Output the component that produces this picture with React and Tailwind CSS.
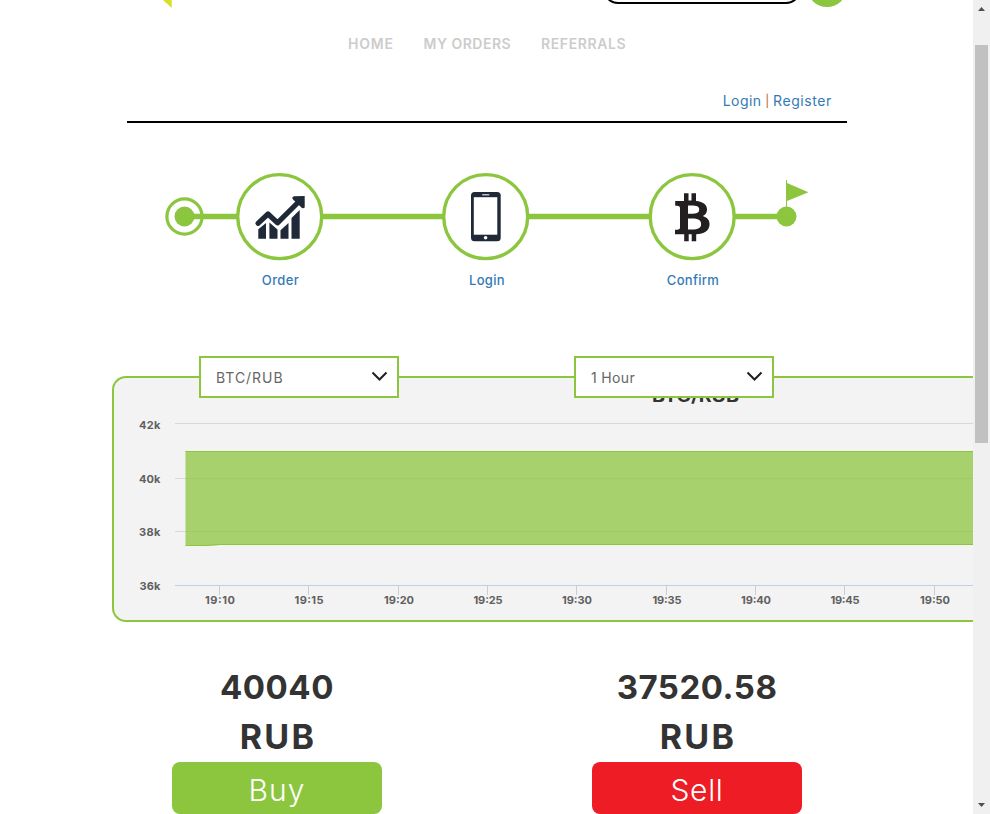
const TIMES = ["19:10", "19:15", "19:20", "19:25", "19:30", "19:35", "19:40", "19:45", "19:50"];
const LEVELS = [
  { label: "42k", y: 423.5, baseline: 429 },
  { label: "40k", y: 478.5, baseline: 483 },
  { label: "38k", y: 531.5, baseline: 536 },
];
const STEPS = [280, 486, 692.5];

function Header() {
  return (
    <header className="flex h-[123px] shrink-0 flex-col">
      <div className="flex h-2 items-start overflow-hidden">
        <svg className="ml-[163px] h-2 w-[9px]" viewBox="0 0 9 8">
          <path d="M0 0H8.7V8Z" fill="#d9df26" />
        </svg>
        <div className="-mt-[36px] ml-[431px] h-10 w-[198px] shrink-0 rounded-[15px] border-2 border-black" />
        <div className="-mt-[33px] ml-[6px] size-10 shrink-0 rounded-full bg-[#8cc63f]" />
      </div>
      <nav className="ml-[348px] mt-[26px] flex h-5 items-center text-[14px] font-semibold leading-5 text-[#ccc]">
        <a className="w-[75.5px] tracking-[0.8px]">HOME</a>
        <a className="w-[117.5px] tracking-[0.5px]">MY ORDERS</a>
        <a className="tracking-[0.6px]">REFERRALS</a>
      </nav>
      <div className="ml-[127px] mt-auto flex h-[32px] w-[720px] justify-end border-b-2 border-black pr-[15px] text-[14px] leading-5 text-[#337ab7]">
        <a className="tracking-[0.45px]">Login</a>
        <span className="w-[11.5px] text-center text-[12px] text-[#b5652a]">|</span>
        <a className="tracking-[0.6px]">Register</a>
      </div>
    </header>
  );
}

function Stepper() {
  return (
    <section className="ml-[160px] mt-[47px] w-[655px] shrink-0">
      <svg className="block h-[95px] w-[655px]" viewBox="160 170 655 95">
        <g stroke="#8cc63f" fill="none">
          <path d="M184 216.5H786" strokeWidth="5.4" />
          <circle cx="184.5" cy="216.5" r="17.6" strokeWidth="3.2" />
          {STEPS.map((x) => (
            <circle key={x} cx={x - 0.3} cy="216.6" r="42" strokeWidth="3.4" fill="#fff" />
          ))}
        </g>
        <circle cx="184.5" cy="216.5" r="10" fill="#8cc63f" />
        <circle cx="786.5" cy="216.5" r="10" fill="#8cc63f" />
        <path d="M786 180H787V183L808.5 192.3L787 201V210H786Z" fill="#8cc63f" />
        <g fill="#1f2937">
          <path d="M258.3 229.2L266 223V238.8H258.3ZM269.4 222.5L277.5 229.4V238.8H269.4ZM280.5 230.2L288.5 223V238.8H280.5ZM291.5 218L299.7 210V238.8H291.5Z" />
          <path d="M258 223.3L268 214L277.5 222.8L299 201.5" fill="none" stroke="#1f2937" strokeWidth="5.2" strokeLinecap="round" strokeLinejoin="round" />
          <path d="M294 196.3L304.7 196V207.5Q302.5 209.3 301 207L293.5 200Q290.8 197.5 294 196.3Z" />
        </g>
        <rect x="471" y="192" width="29.7" height="49.3" rx="3.5" fill="#1f2937" />
        <rect x="473.8" y="197.2" width="23.5" height="37.5" fill="#fff" />
        <rect x="482" y="194.1" width="7.5" height="1.4" rx=".7" fill="#bbc0c5" />
        <circle cx="485.6" cy="237.8" r="1.8" fill="#fff" />
        <path
          d="M684 193.3H688.5V200.5H691.5V193.3H696V201C703 201.5 707.5 205 707 210C706.7 213 705.5 215 702.8 216C707.5 217.5 710 220.5 709.5 225C709 231 704 234 696.2 234.3V241.2H691.7V234.3H688.7V241.2H684.2V234.3H675V229.8C679 229.8 680 229.5 680 227.3V208C680 206 678.5 205.7 675.2 205.7V201H684ZM688 205.6V213.7H691C697 213.7 699.2 212.5 699.2 209.5C699.2 206.5 696.5 205.6 691.5 205.6ZM688 218.4V229.5H692C698 229.5 701.1 228.2 701.1 224C701.1 219.9 698 218.4 692 218.4Z"
          fill="#231f20"
          fillRule="evenodd"
        />
      </svg>
      <div className="ml-[17px] mt-[5px] flex h-5 text-center text-[13px] font-medium leading-5 text-[#337ab7]">
        <a className="w-[207px] tracking-[0.4px]">Order</a>
        <a className="w-[206px] tracking-[0.3px]">Login</a>
        <a className="w-[206px] tracking-[0.3px]">Confirm</a>
      </div>
    </section>
  );
}

function Select({ children, className }) {
  return (
    <div className={"absolute -top-[22px] flex h-[42px] w-[200px] items-center justify-between border-2 border-[#8cc63f] bg-white pl-[15px] pr-[9px] text-[14px] text-[#666] " + className}>
      {children}
      <svg className="-mt-0.5 h-[11px] w-[17px]" viewBox="0 0 17 11" fill="none" stroke="#231f20" strokeWidth="2">
        <path d="M1.5 1.5L8.5 8.5L15.5 1.5" />
      </svg>
    </div>
  );
}

function Chart() {
  return (
    <section className="relative ml-[112px] mt-[86px] h-[246px] shrink-0 rounded-l-[14px] border-2 border-r-0 border-[#8cc63f] bg-[#f3f3f3]">
      <svg className="block h-[242px] w-[859px]" viewBox="114 378 859 242" fontWeight="700" fill="#606060" fontSize="11">
        <text x="652" y="402" fontSize="17" fill="#333" textLength="87" lengthAdjust="spacingAndGlyphs">BTC/RUB</text>
        {LEVELS.map(({ label, y, baseline }) => (
          <g key={label}>
            <path d={`M175 ${y}H973`} stroke="#d8d8d8" />
            <text x="160.5" y={baseline} textAnchor="end" textLength="21.5">{label}</text>
          </g>
        ))}
        <path d="M185.5 451H973V545H220L205 546H185.5Z" fill="#8cc63f" fillOpacity=".75" />
        <path d="M185.5 451.5H973M185.5 545.5H205L220 544.5H973" stroke="#8cc63f" fill="none" />
        <path d="M175 585.5H973" stroke="#c0d0e0" />
        <text x="160.5" y="590" textAnchor="end" textLength="21">36k</text>
        {TIMES.map((time, i) => {
          const x = Math.floor(219.3 + i * 89.35) + 0.5;
          return (
            <g key={time}>
              <path d={`M${x} 586V595`} stroke="#c0d0e0" />
              <text x={x + 0.5} y="604" textAnchor="middle" textLength={i % 2 === 0 ? 30 : 29}>{time}</text>
            </g>
          );
        })}
      </svg>
      <Select className="left-[85px]"><span className="tracking-[0.95px]">BTC/RUB</span></Select>
      <Select className="left-[460px]"><span className="tracking-[0.35px]">1 Hour</span></Select>
    </section>
  );
}

function Quote({ price, action, className }) {
  return (
    <div className="flex w-[210px] flex-col text-center">
      <div className="whitespace-nowrap text-[34px] font-bold leading-[50px] text-[#333]">
        <div className="text-[33px] tracking-[0.5px]">{price}</div>
        <div className="pl-[2px] tracking-[2.3px]">RUB</div>
      </div>
      <button className={"h-[52px] rounded-[8px] pt-[3px] text-[30px] font-light leading-[48px] text-white " + className}>{action}</button>
    </div>
  );
}

function Scrollbar() {
  return (
    <aside className="flex w-[17px] shrink-0 flex-col items-center bg-[#f0f0f0]">
      <svg className="mt-[7px] h-1 w-[7px]" viewBox="0 0 7 4"><path d="M0 4L3.5 0L7 4Z" fill="#505050" /></svg>
      <div className="mt-[34px] h-[398px] w-[13px] bg-[#c1c1c1]" />
      <svg className="mb-[7px] mt-auto h-1 w-[7px]" viewBox="0 0 7 4"><path d="M0 0H7L3.5 4Z" fill="#505050" /></svg>
    </aside>
  );
}

export default function App() {
  return (
    <div className="flex h-[814px] w-[990px] overflow-hidden bg-white font-['Inter','Liberation_Sans',sans-serif]">
      <main className="flex w-[973px] shrink-0 flex-col">
        <Header />
        <Stepper />
        <Chart />
        <section className="ml-[172px] mt-[40px] flex gap-[210px]">
          <Quote price="40040" action="Buy" className="bg-[#8cc63f] tracking-[1px]" />
          <Quote price="37520.58" action="Sell" className="bg-[#ee1c25] tracking-[0.7px]" />
        </section>
      </main>
      <Scrollbar />
    </div>
  );
}
